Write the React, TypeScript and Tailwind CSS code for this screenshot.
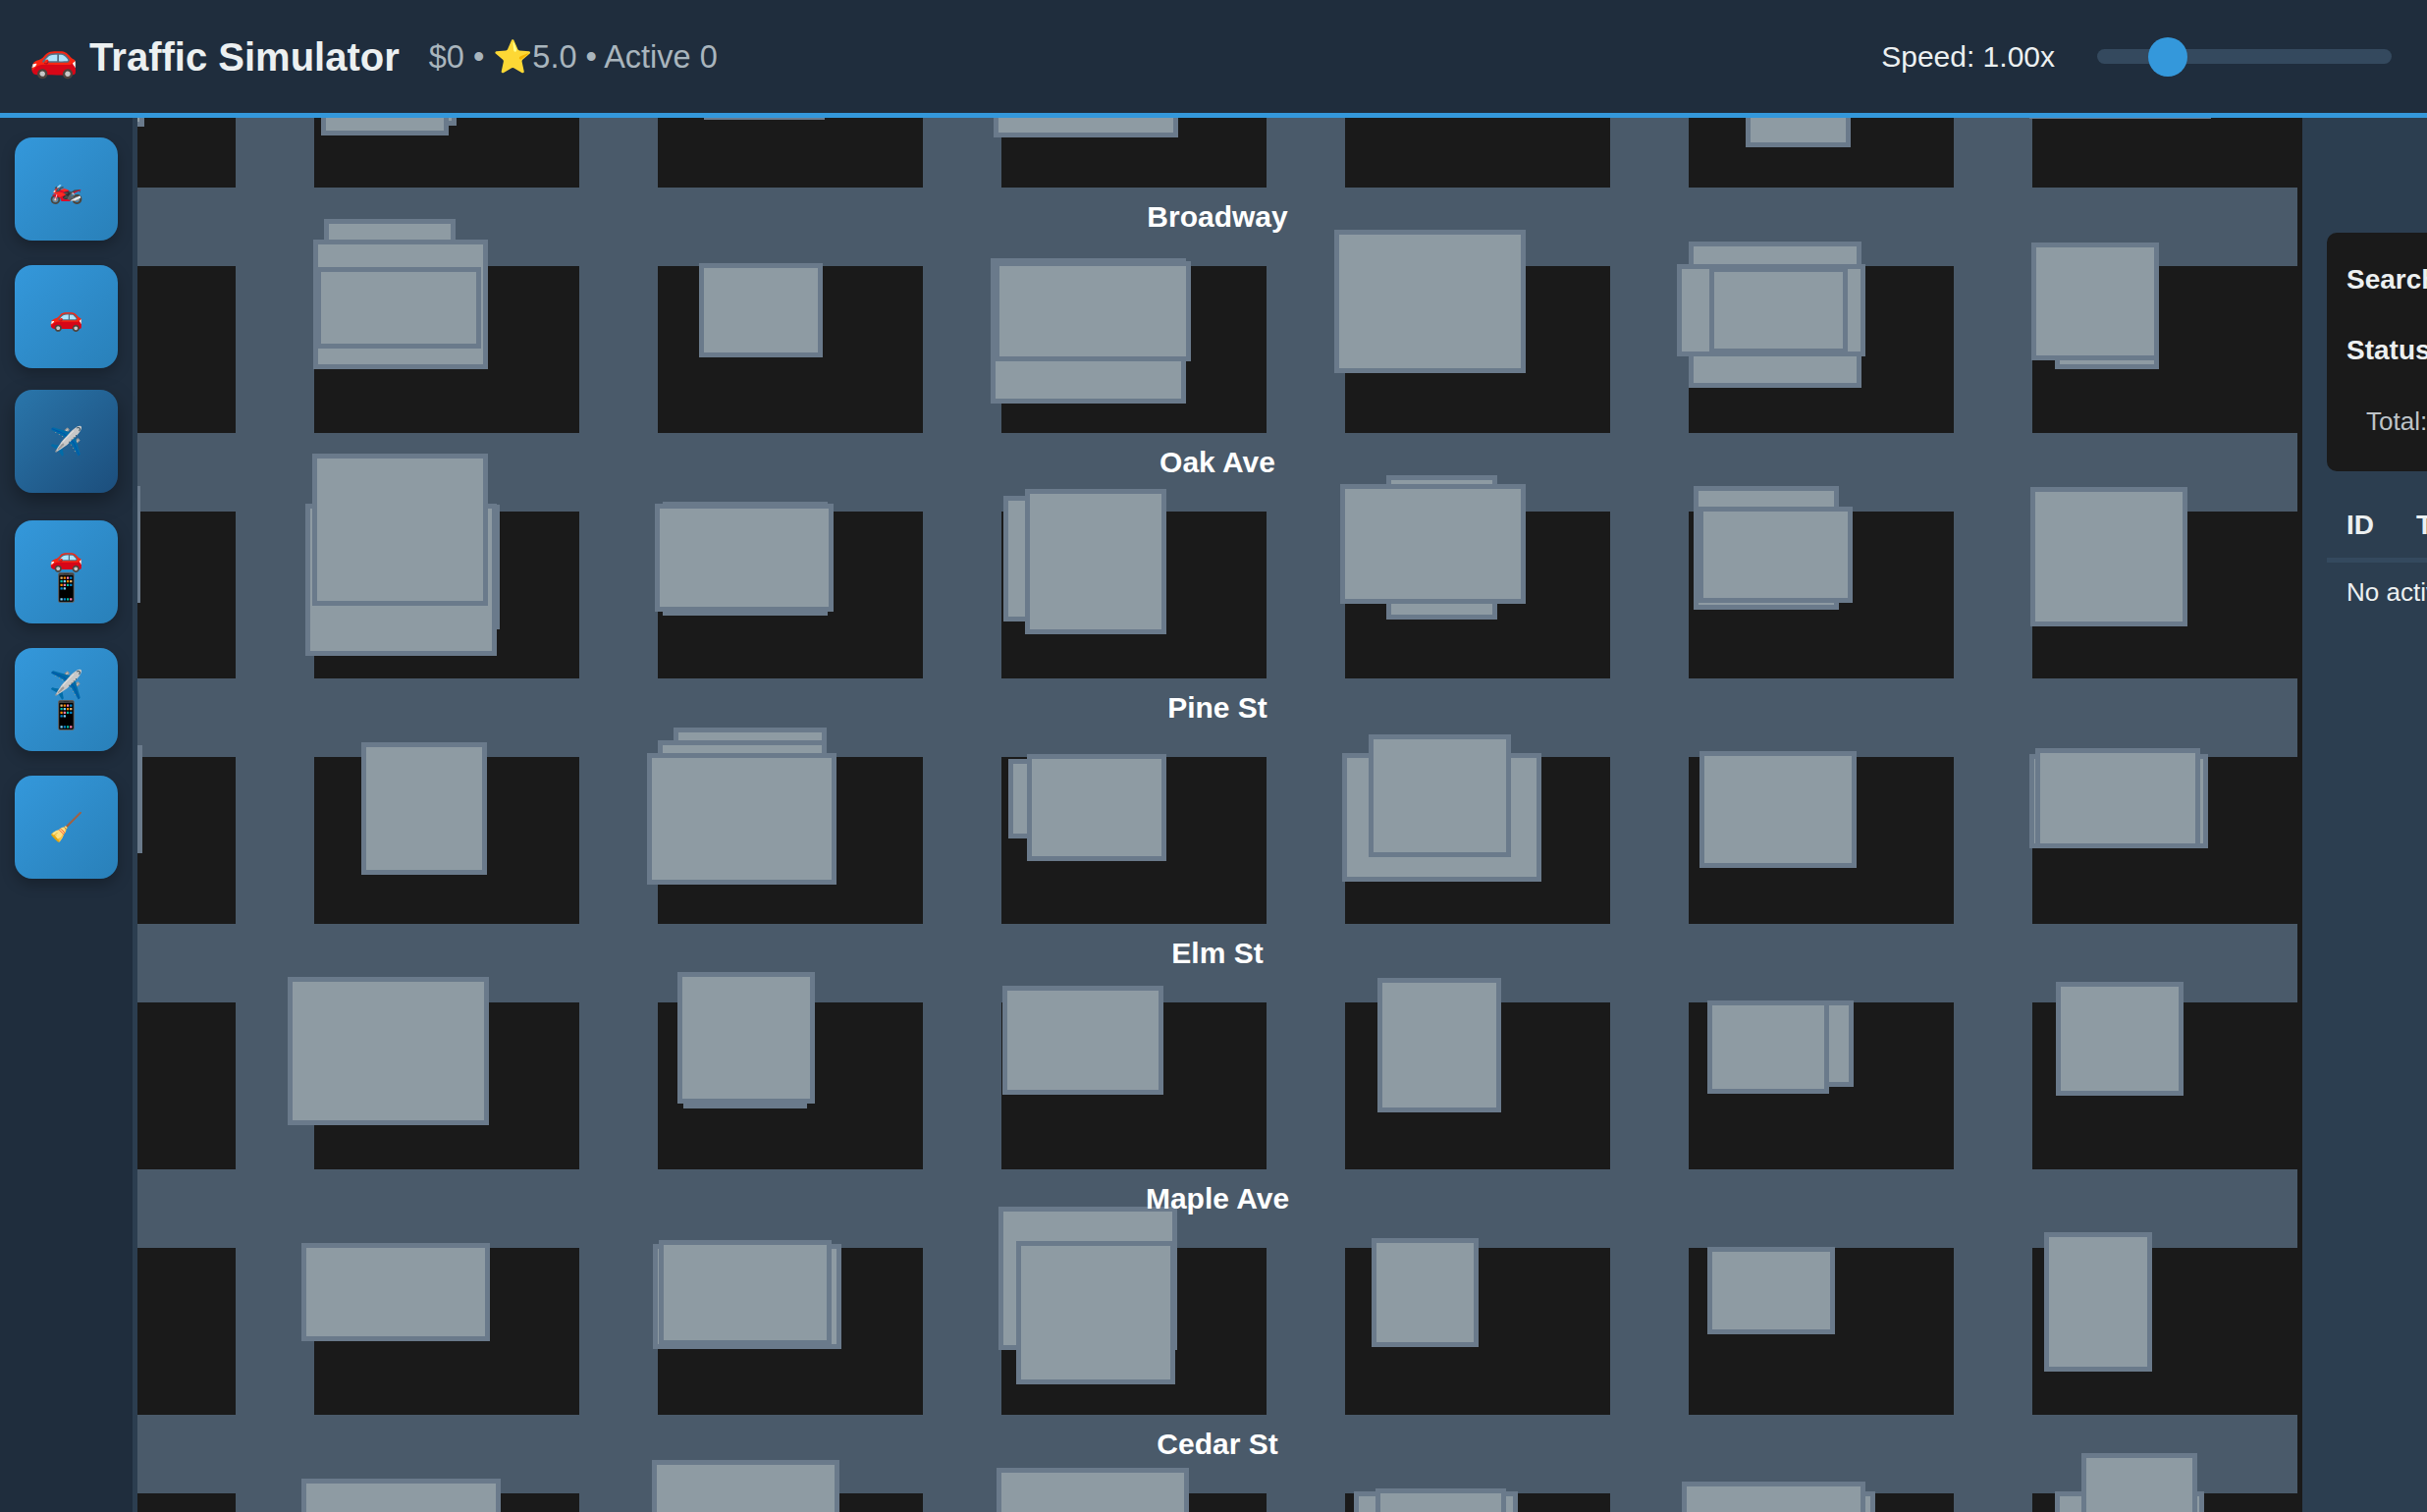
const toolButtons = [
  { icons: ['🏍️'] },
  { icons: ['🚗'] },
  { icons: ['✈️'], hover: true },
  { icons: ['🚗', '📱'] },
  { icons: ['✈️', '📱'] },
  { icons: ['🧹'] },
];

const horizontalRoads = [71, 321, 571, 821, 1071, 1321];
const verticalRoads = [100, 450, 800, 1150, 1500, 1850];

const streets = [
  { name: 'Broadway', y: 101 },
  { name: 'Oak Ave', y: 351 },
  { name: 'Pine St', y: 601 },
  { name: 'Elm St', y: 851 },
  { name: 'Maple Ave', y: 1101 },
  { name: 'Cedar St', y: 1351 },
];

// page coordinates [x0, y0, x1, y1], later ones sit on top
const buildings: number[][] = [
  [60, 60, 147, 129],
  [340, 60, 465, 128],
  [327, 60, 457, 138],
  [717, 60, 840, 122],
  [1012, 60, 1200, 140],
  [1778, 60, 1885, 150],
  [2067, 60, 2252, 121],

  [330, 223, 464, 320],
  [319, 244, 497, 376],
  [322, 272, 490, 355],
  [712, 268, 838, 364],
  [1009, 263, 1208, 411],
  [1013, 266, 1213, 368],
  [1359, 234, 1554, 380],
  [1720, 246, 1896, 395],
  [1708, 269, 1900, 363],
  [1741, 272, 1882, 360],
  [2093, 300, 2199, 376],
  [2069, 247, 2199, 367],

  [60, 495, 143, 614],
  [330, 514, 509, 641],
  [311, 513, 506, 668],
  [318, 462, 497, 617],
  [675, 511, 843, 627],
  [667, 513, 849, 623],
  [1022, 505, 1100, 633],
  [1044, 498, 1188, 646],
  [1412, 484, 1525, 631],
  [1365, 493, 1554, 615],
  [1725, 495, 1873, 621],
  [1730, 516, 1887, 614],
  [2068, 496, 2228, 638],

  [60, 759, 145, 869],
  [368, 756, 496, 891],
  [686, 741, 842, 790],
  [670, 754, 842, 800],
  [659, 767, 852, 901],
  [1027, 773, 1100, 854],
  [1046, 768, 1188, 877],
  [1367, 767, 1570, 898],
  [1394, 748, 1539, 873],
  [1731, 765, 1891, 884],
  [2067, 768, 2249, 864],
  [2073, 762, 2241, 864],

  [293, 995, 498, 1146],
  [696, 1040, 822, 1129],
  [690, 990, 830, 1124],
  [1021, 1004, 1185, 1115],
  [1403, 996, 1529, 1133],
  [1780, 1019, 1888, 1107],
  [1739, 1019, 1863, 1114],
  [2094, 1000, 2224, 1116],

  [307, 1266, 499, 1366],
  [665, 1267, 857, 1374],
  [671, 1263, 847, 1370],
  [1017, 1229, 1199, 1375],
  [1035, 1264, 1197, 1410],
  [1397, 1261, 1506, 1372],
  [1739, 1270, 1869, 1359],
  [2082, 1255, 2192, 1397],

  [307, 1506, 510, 1600],
  [664, 1487, 855, 1600],
  [1015, 1495, 1211, 1600],
  [1379, 1519, 1546, 1600],
  [1401, 1516, 1534, 1600],
  [1800, 1519, 1910, 1600],
  [1713, 1509, 1900, 1600],
  [2093, 1519, 2245, 1600],
  [2120, 1480, 2238, 1600],
];

function Header() {
  return (
    <header className="flex h-[120px] shrink-0 items-center justify-between border-b-[5px] border-[#3498db] bg-[#1f2d3d] pl-[30px] pr-[36px]">
      <div className="flex items-center gap-[30px]">
        <h1 className="text-[40px] font-bold leading-none text-[#ecf0f1]">🚗 Traffic Simulator</h1>
        <span className="mt-[2px] text-[32.5px] leading-none text-[#a9b5bd]">$0 • ⭐5.0 • Active 0</span>
      </div>
      <div className="flex items-center gap-[43px]">
        <span className="text-[30px] leading-none text-[#ecf0f1]">Speed: 1.00x</span>
        <div className="relative h-[15px] w-[300px] rounded-full bg-[#34495e]">
          <div className="absolute left-[52px] top-[-12px] h-[40px] w-[40px] rounded-full bg-[#3498db]" />
        </div>
      </div>
    </header>
  );
}

function Sidebar() {
  return (
    <aside className="flex w-[140px] shrink-0 flex-col gap-[25px] border-r-[5px] border-[#2c3e50] bg-[#1f2d3d] pl-[15px] pt-[20px]">
      {toolButtons.map((button, index) => (
        <button
          className={
            button.hover
              ? 'flex h-[105px] w-[105px] -translate-y-[3px] flex-col items-center justify-center rounded-[18px] bg-linear-to-br from-[#2a76ab] to-[#1c4e7c] text-[28px] leading-[31px] shadow-[0_8px_20px_rgba(0,0,0,0.35)]'
              : 'flex h-[105px] w-[105px] flex-col items-center justify-center rounded-[18px] bg-linear-to-br from-[#3498db] to-[#2980b9] text-[28px] leading-[31px] shadow-[0_6px_14px_rgba(0,0,0,0.25)]'
          }
          key={index}
        >
          {button.icons.map((icon) => (
            <span key={icon}>{icon}</span>
          ))}
        </button>
      ))}
    </aside>
  );
}

function CityMap() {
  return (
    <main className="relative h-full w-[2205px] shrink-0 overflow-hidden bg-[#1a1a1a]">
      {horizontalRoads.map((y) => (
        <div className="absolute left-0 h-[80px] w-[2200px] bg-[#4a5a6a]" key={y} style={{ top: y }} />
      ))}
      {verticalRoads.map((x) => (
        <div className="absolute top-0 h-full w-[80px] bg-[#4a5a6a]" key={x} style={{ left: x }} />
      ))}
      {buildings.map(([x0, y0, x1, y1], index) => (
        <div
          className="absolute box-border border-[5px] border-[#6a7a8b] bg-[#8e9ba3]"
          key={index}
          style={{ left: x0 - 140, top: y0 - 120, width: x1 - x0, height: y1 - y0 }}
        />
      ))}
      {streets.map((street) => (
        <span
          className="absolute left-[1100px] -translate-x-1/2 -translate-y-1/2 whitespace-nowrap text-[30px] font-bold leading-none text-white"
          key={street.name}
          style={{ top: street.y }}
        >
          {street.name}
        </span>
      ))}
    </main>
  );
}

function VehiclePanel() {
  return (
    <aside className="h-full w-[500px] shrink-0 bg-[#2c3e50] px-[25px] pt-[117px] text-[26px] text-[#ecf0f1]">
      <div className="flex h-[243px] flex-col rounded-[10px] bg-[#1a1a1a] pl-[20px] pt-[30px]">
        <label className="h-[72px] text-[28px] font-bold leading-[36px]">Search:</label>
        <label className="h-[72px] text-[28px] font-bold leading-[36px]">Status:</label>
        <p className="pl-[20px] text-[26px] leading-[36px] text-[#bdc3c7]">Total: 0</p>
      </div>
      <div className="mt-[35px] flex gap-[43px] border-b-[5px] border-[#34495e] pb-[13px] pl-[20px] text-[28px] font-bold leading-[40px]">
        <span>ID</span>
        <span>Type</span>
      </div>
      <p className="pl-[20px] pt-[10px] leading-[40px]">No active vehicles</p>
    </aside>
  );
}

export default function App() {
  return (
    <div className="flex h-[1540px] w-[2472px] flex-col overflow-hidden bg-[#1a1a1a] font-['Liberation_Sans',sans-serif]">
      <Header />
      <div className="flex min-h-0 flex-1 overflow-hidden">
        <Sidebar />
        <CityMap />
        <VehiclePanel />
      </div>
    </div>
  );
}
